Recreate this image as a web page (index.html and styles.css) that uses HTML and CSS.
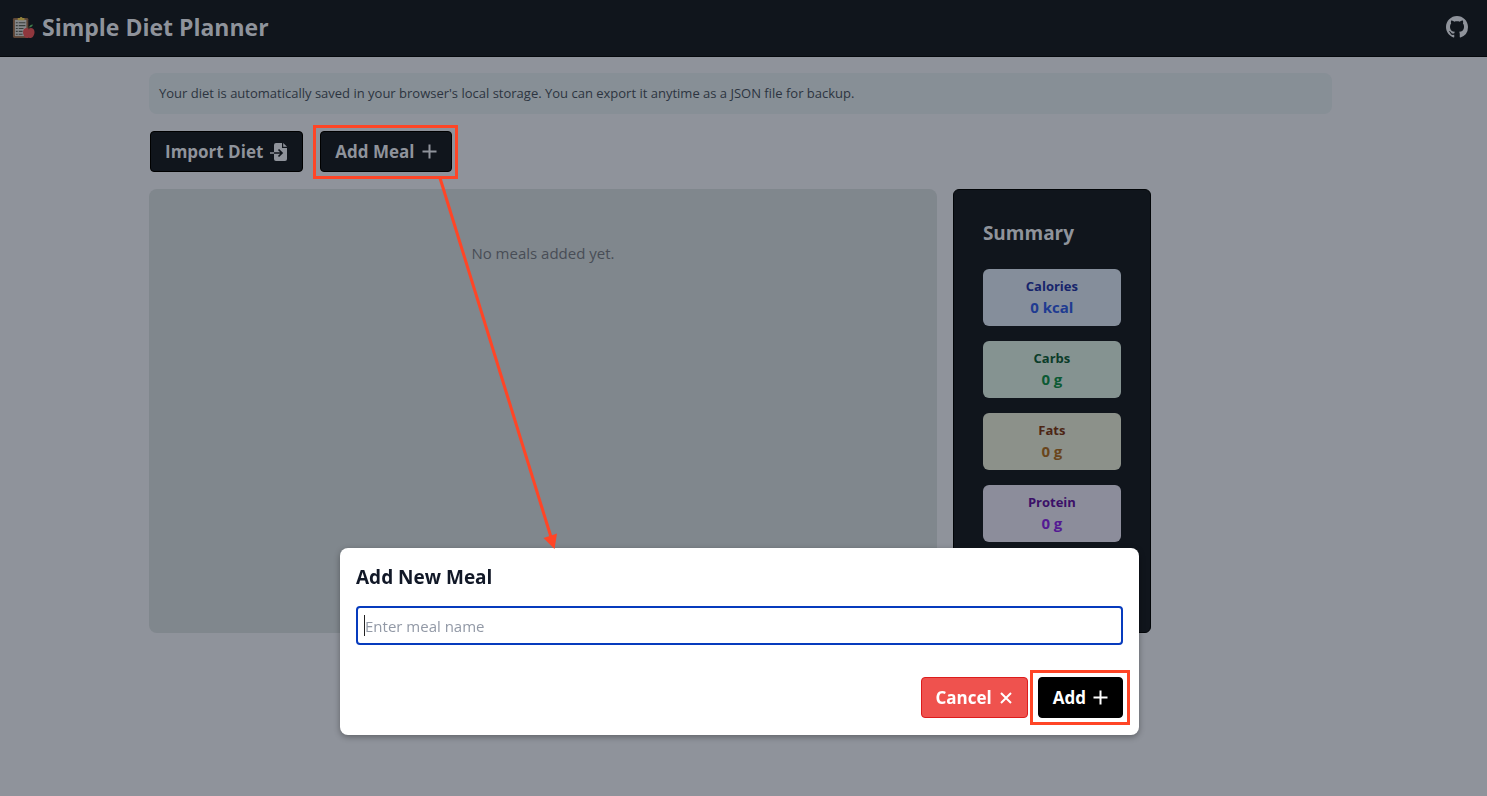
FILE: index.html
```html
<!DOCTYPE html>
<html lang="en">
<head>
<meta charset="utf-8">
<meta name="viewport" content="width=device-width, initial-scale=1">
<title>Simple Diet Planner</title>
<link rel="stylesheet" href="styles.css">
</head>
<body>
<header class="topbar">
  <h1 class="brand">
    <svg class="brand-icon" viewBox="0 0 24 24" aria-hidden="true">
      <rect x="1" y="2" width="16" height="21" rx="1.5" fill="#5d4536"/>
      <rect x="3" y="4" width="12" height="17" fill="#84878a"/>
      <path d="M6 4.500V2h2a1.600 1.600 0 0 1 3 0h2v2.500z" fill="#92813b"/>
      <path d="M4 7h2m1 0h7M4 10h2m1 0h7M4 13h2m1 0h5M4 16h2m1 0h4M4 19h2m1 0h4" stroke="#383e3c" stroke-width="1.2"/>
      <path d="M17.500 13.200c2-1.600 6-.9 6 3.600 0 3.400-2.200 6.200-3.800 6.200-.9 0-1.400-.4-2.200-.4s-1.300.4-2.200.4c-1.600 0-3.800-2.800-3.800-6.200 0-4.500 4-5.200 6-3.600z" fill="#8f373d"/>
      <path d="M17.500 14c0-1.500.1-2.100.5-3" stroke="#4a382c" fill="none"/>
      <path d="M18 11.800c.2-2 1.700-2.900 3.700-3-.1 1.900-1.500 3-3.700 3z" fill="#3e7c4b"/>
    </svg>
    Simple Diet Planner
  </h1>
  <a class="repo" href="#" aria-label="GitHub">
    <svg viewBox="0 0 16 16" aria-hidden="true"><path fill="currentColor" d="M8 0C3.580 0 0 3.580 0 8c0 3.540 2.290 6.530 5.470 7.590.4.07.55-.17.55-.38 0-.19-.01-.82-.01-1.490-2.010.37-2.530-.49-2.690-.94-.09-.23-.48-.94-.82-1.130-.28-.15-.68-.52-.01-.53.63-.01 1.080.58 1.230.82.72 1.210 1.870.87 2.330.66.07-.52.28-.87.51-1.070-1.780-.2-3.640-.89-3.640-3.950 0-.87.31-1.590.82-2.150-.08-.2-.36-1.020.08-2.120 0 0 .67-.21 2.200.82.64-.18 1.320-.27 2-.27s1.360.09 2 .27c1.530-1.040 2.200-.82 2.200-.82.44 1.100.16 1.920.08 2.120.51.56.82 1.270.82 2.150 0 3.070-1.870 3.750-3.650 3.950.29.25.54.73.54 1.480 0 1.070-.01 1.930-.01 2.200 0 .21.15.46.55.38A8.010 8.010 0 0 0 16 8c0-4.420-3.580-8-8-8z"/></svg>
  </a>
</header>
<main class="page">
  <p class="notice">Your diet is automatically saved in your browser's local storage. You can export it anytime as a JSON file for backup.</p>
  <div class="toolbar">
    <button class="btn btn-muted" type="button">Import Diet
      <svg class="icon-import" viewBox="0 0 18 20" aria-hidden="true">
        <path fill="currentColor" d="M6 1h6v5h5v11a2 2 0 0 1-2 2H6a2 2 0 0 1-2-2V3a2 2 0 0 1 2-2z"/>
        <path fill="currentColor" d="M13.200 1 17 4.800h-3.800z"/>
        <path d="M4 11h7.500M8.500 7.500l3.500 3.500L8.500 14.500" fill="none" stroke="#10151c" stroke-width="1.700"/>
        <path d="M0 11h4" stroke="currentColor" stroke-width="1.500"/>
      </svg>
    </button>
    <button class="btn btn-muted" type="button">Add Meal
      <svg class="icon-plus" viewBox="0 0 15 15" aria-hidden="true"><path d="M7.500.5v14M.5 7.500h14" stroke="currentColor" stroke-width="2"/></svg>
    </button>
  </div>
  <div class="content">
    <section class="board"><p>No meals added yet.</p></section>
    <aside class="summary">
      <h2>Summary</h2>
      <dl class="stats">
        <div class="stat calories"><dt>Calories</dt><dd>0 kcal</dd></div>
        <div class="stat carbs"><dt>Carbs</dt><dd>0 g</dd></div>
        <div class="stat fats"><dt>Fats</dt><dd>0 g</dd></div>
        <div class="stat protein"><dt>Protein</dt><dd>0 g</dd></div>
      </dl>
    </aside>
  </div>
</main>
<section class="modal" role="dialog" aria-labelledby="modal-title">
  <h2 id="modal-title">Add New Meal</h2>
  <div class="field">
    <input class="meal-input" type="text" placeholder="Enter meal name" aria-label="Meal name">
    <span class="caret"></span>
  </div>
  <div class="actions">
    <button class="btn btn-danger" type="button">Cancel
      <svg class="icon-close" viewBox="0 0 14 14" aria-hidden="true"><path d="M2 2l10 10M12 2L2 12" stroke="currentColor" stroke-width="2"/></svg>
    </button>
    <button class="btn btn-primary" type="button">Add
      <svg class="icon-plus" viewBox="0 0 15 15" aria-hidden="true"><path d="M7.500.5v14M.5 7.500h14" stroke="currentColor" stroke-width="2"/></svg>
    </button>
  </div>
</section>
<svg class="annotations" width="1487" height="796" viewBox="0 0 1487 796" aria-hidden="true">
  <g fill="none" stroke="#ff4526" stroke-width="3">
    <rect x="314.500" y="126.500" width="142" height="51"/>
    <rect x="1031.500" y="671.500" width="97" height="52"/>
    <path d="M440 178L551 537"/>
  </g>
  <path d="M543.500 538L557 533.500L554.500 549z" fill="#ff4526"/>
</svg>
</body>
</html>
```
FILE: styles.css
```css
* { box-sizing: border-box; }
body {
  margin: 0;
  min-height: 100vh;
  background: #8f939b;
  font-family: "Open Sans", "Noto Sans", sans-serif;
  font-size: 15px;
  line-height: 24px;
}
h1, h2, p, dl, dd { margin: 0; }
.topbar {
  display: flex;
  align-items: center;
  justify-content: space-between;
  height: 57px;
  padding: 0 19px 2px 12px;
  background: #10151c;
  border-bottom: 1px solid #06090d;
  color: #8f939b;
}
.brand {
  display: flex;
  align-items: center;
  gap: 7px;
  font-size: 23px;
  line-height: 32px;
  font-weight: 700;
}
.brand-icon { width: 23px; height: 23px; }
.repo { display: flex; color: #8f939b; }
.repo svg { width: 22px; height: 22px; }
.page { margin: 16px 155px 0 149px; }
.notice {
  padding: 10px;
  border-radius: 8px;
  background: #878f96;
  color: #2c3440;
  font-size: 13px;
  line-height: 21px;
}
.toolbar { display: flex; gap: 17px; margin: 17px 1px; }
.btn {
  display: flex;
  align-items: center;
  gap: 7px;
  height: 41px;
  padding: 0 14px;
  border: 1px solid #000;
  border-radius: 4px;
  font-family: inherit;
  font-size: 17px;
  font-weight: 700;
}
.btn-muted { background: #10151c; color: #8f939b; }
.btn-primary { background: #000; color: #fff; }
.btn-danger { background: #ef524e; border-color: #dc1c1c; color: #fff; }
.icon-import { width: 18px; height: 20px; }
.icon-plus { width: 15px; height: 15px; }
.icon-close { width: 14px; height: 14px; }
.content { display: flex; gap: 16px; }
.board {
  flex: 0 0 66.6%;
  min-height: 444px;
  padding: 52px 16px;
  border-radius: 8px;
  background: #80878d;
  color: #484d56;
  text-align: center;
}
.summary {
  width: 198px;
  padding: 29px;
  border: 1px solid #020508;
  border-radius: 6px;
  background: #10151c;
}
.summary h2 { color: #8f939b; font-size: 19px; line-height: 28px; }
.stats { display: grid; gap: 15px; margin: 22px 0 0; }
.stat {
  padding: 6px 0 8px;
  border-radius: 6px;
  text-align: center;
  font-weight: 700;
}
.stat dt { font-size: 13px; line-height: 22px; }
.stat dd { font-size: 15px; line-height: 21px; }
.calories { background: #858e9b; }
.calories dt { color: #16246b; }
.calories dd { color: #203b91; }
.carbs { background: #859391; }
.carbs dt { color: #0b3c29; }
.carbs dd { color: #0c5a34; }
.fats { background: #8c918a; }
.fats dt { color: #4c2514; }
.fats dd { color: #69451c; }
.protein { background: #8c8d9b; }
.protein dt { color: #3b1068; }
.protein dd { color: #541a93; }
.modal {
  position: fixed;
  left: 0;
  right: 8px;
  bottom: 61px;
  max-width: 799px;
  margin: 0 auto;
  padding: 15px 16px 17px;
  border-radius: 8px;
  background: #fff;
  box-shadow: 0 2px 6px #0005;
}
.modal h2 { color: #111827; font-size: 19px; line-height: 28px; }
.field { position: relative; margin-top: 15px; }
.meal-input {
  display: block;
  width: 100%;
  height: 39px;
  padding: 0 7px;
  border: 2px solid #073bbd;
  border-radius: 4px;
  outline: 0;
  background: #fff;
  font: inherit;
}
.meal-input::placeholder { color: #9299a6; opacity: 1; }
.caret { position: absolute; left: 8px; top: 9px; width: 1px; height: 21px; background: #222; }
.actions { display: flex; justify-content: flex-end; gap: 10px; margin-top: 32px; }
.annotations { position: absolute; left: 0; top: 0; pointer-events: none; }
```
